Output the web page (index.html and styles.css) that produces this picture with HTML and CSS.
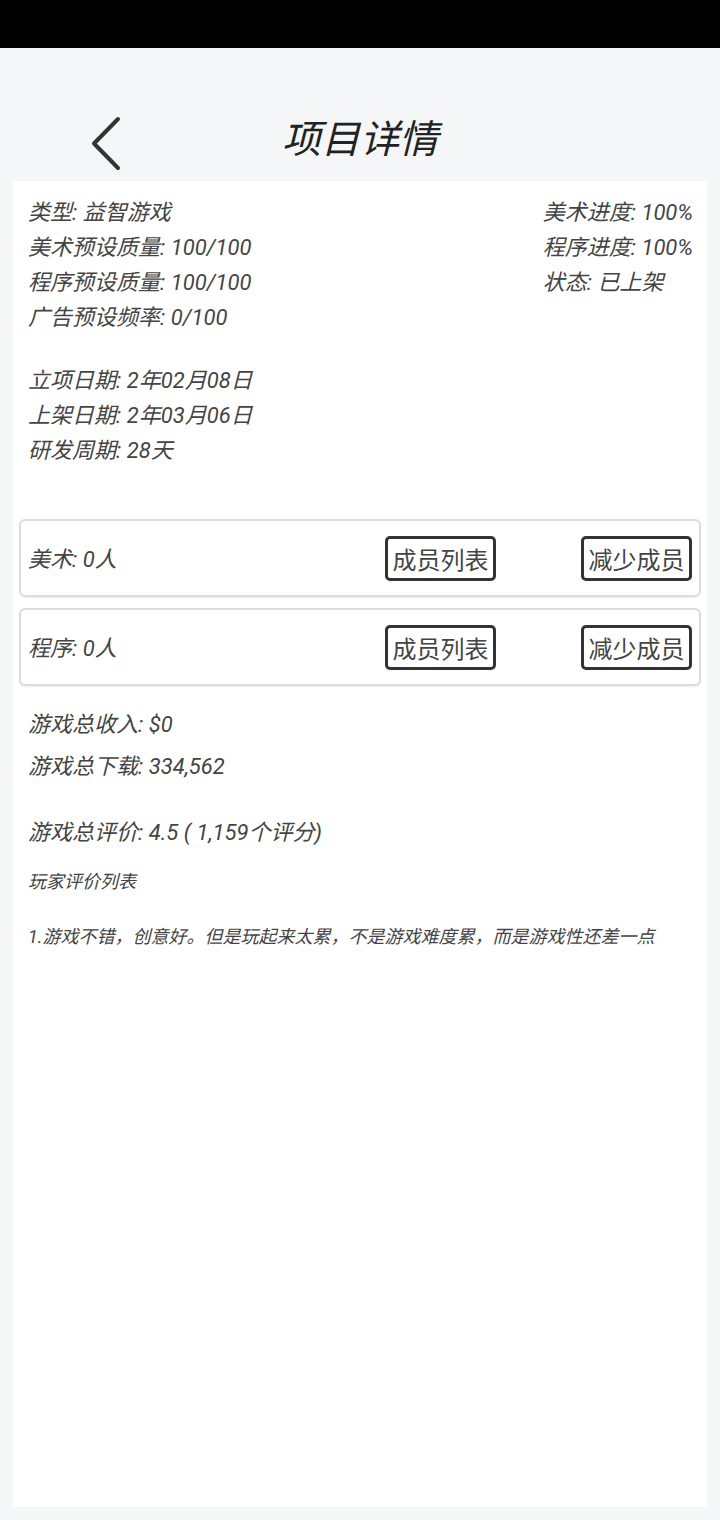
FILE: index.html
```html
<!DOCTYPE html>
<html lang="zh-CN">
<head>
  <meta charset="UTF-8" />
  <meta name="viewport" content="width=device-width, initial-scale=1.0"/>
  <title>项目详情</title>
  <link rel="stylesheet" href="styles.css">
</head>
<body>
  <!-- Status bar -->
  <div class="status-bar"></div>

  <!-- Header -->
  <header class="top-bar">
    <div class="back-cell">
      <button class="back-btn" aria-label="返回">
        <svg width="34" height="56" viewBox="0 0 34 56">
          <path d="M29 3 L5 27.5 L29 52" fill="none" stroke="#333" stroke-width="4" stroke-linecap="round" stroke-linejoin="round"/>
        </svg>
      </button>
    </div>
    <h1 class="page-title">项目详情</h1>
    <div></div>
  </header>

  <!-- Project details -->
  <section class="detail-card">
    <div class="info-row">
      <div class="info-col">
        <p>类型: 益智游戏</p>
        <p>美术预设质量: 100/100</p>
        <p>程序预设质量: 100/100</p>
        <p>广告预设频率: 0/100</p>
      </div>
      <div class="info-col">
        <p>美术进度: 100%</p>
        <p>程序进度: 100%</p>
        <p>状态: 已上架</p>
      </div>
    </div>

    <div class="info-col dates">
      <p>立项日期: 2年02月08日</p>
      <p>上架日期: 2年03月06日</p>
      <p>研发周期: 28天</p>
    </div>

    <div class="teams">
      <div class="team-row">
        <span class="team-label">美术: 0人</span>
        <button class="team-btn">成员列表</button>
        <button class="team-btn">减少成员</button>
      </div>
      <div class="team-row">
        <span class="team-label">程序: 0人</span>
        <button class="team-btn">成员列表</button>
        <button class="team-btn">减少成员</button>
      </div>
    </div>

    <div class="stats">
      <p class="income">游戏总收入: $0</p>
      <p class="downloads">游戏总下载: 334,562</p>
      <p class="rating">游戏总评价: 4.5 ( 1,159个评分)</p>
      <p class="review-title">玩家评价列表</p>
      <p class="review">1.游戏不错，创意好。但是玩起来太累，不是游戏难度累，而是游戏性还差一点</p>
    </div>
  </section>
</body>
</html>
```

FILE: styles.css
```css
* {
  margin: 0;
  padding: 0;
  box-sizing: border-box;
  font-family: Roboto, "Noto Sans CJK SC", sans-serif;
}

body {
  background-color: #f5f6f8;
  color: #444;
  width: 720px;
  height: 1520px;
  overflow: hidden;
}

.status-bar {
  height: 48px;
  background-color: #000;
}

/* Header */
.top-bar {
  height: 133px;
  display: grid;
  grid-template-columns: 1fr auto 1fr;
  align-items: end;
  padding-bottom: 17px;
}

.back-cell {
  padding-left: 89px;
  align-self: end;
  margin-bottom: -8px;
}

.back-btn {
  display: block;
  background: none;
  border: none;
  cursor: pointer;
}

.back-btn svg {
  display: block;
}

.page-title {
  font-size: 39px;
  font-weight: normal;
  font-style: italic;
  line-height: 48px;
  color: #222;
}

/* Card */
.detail-card {
  margin: 0 13px;
  height: 1326px;
  background-color: #fff;
  border-radius: 4px;
  padding-top: 14px;
}

.info-row {
  display: flex;
  justify-content: space-between;
  padding: 0 14px 0 15px;
}

.info-col p {
  font-size: 22px;
  font-style: italic;
  line-height: 35px;
  white-space: nowrap;
}

.dates {
  margin-top: 28px;
  padding-left: 15px;
}

/* Team rows */
.teams {
  margin-top: 51px;
  padding: 0 6px;
  display: flex;
  flex-direction: column;
  gap: 11px;
}

.team-row {
  height: 78px;
  display: flex;
  align-items: center;
  padding: 0 7px;
  border: 2px solid #dcdcdc;
  border-radius: 6px;
  box-shadow: 0 1px 2px rgba(0, 0, 0, 0.08);
}

.team-label {
  flex: 1;
  font-size: 22px;
  font-style: italic;
  margin-top: -2px;
}

.team-btn {
  width: 111px;
  height: 45px;
  background-color: #fff;
  border: 3px solid #333;
  border-radius: 5px;
  font-size: 24px;
  color: #444;
  cursor: pointer;
}

.team-btn + .team-btn {
  margin-left: 85px;
}

/* Stats */
.stats {
  padding-left: 15px;
}

.stats p {
  font-size: 22px;
  font-style: italic;
  line-height: 35px;
}

.income {
  margin-top: 21px;
}

.downloads {
  margin-top: 7px;
}

.rating {
  margin-top: 31px;
}

.stats .review-title {
  margin-top: 19px;
  font-size: 18px;
  line-height: 26px;
}

.stats .review {
  margin-top: 29px;
  font-size: 18px;
  line-height: 26px;
  white-space: nowrap;
}
```
